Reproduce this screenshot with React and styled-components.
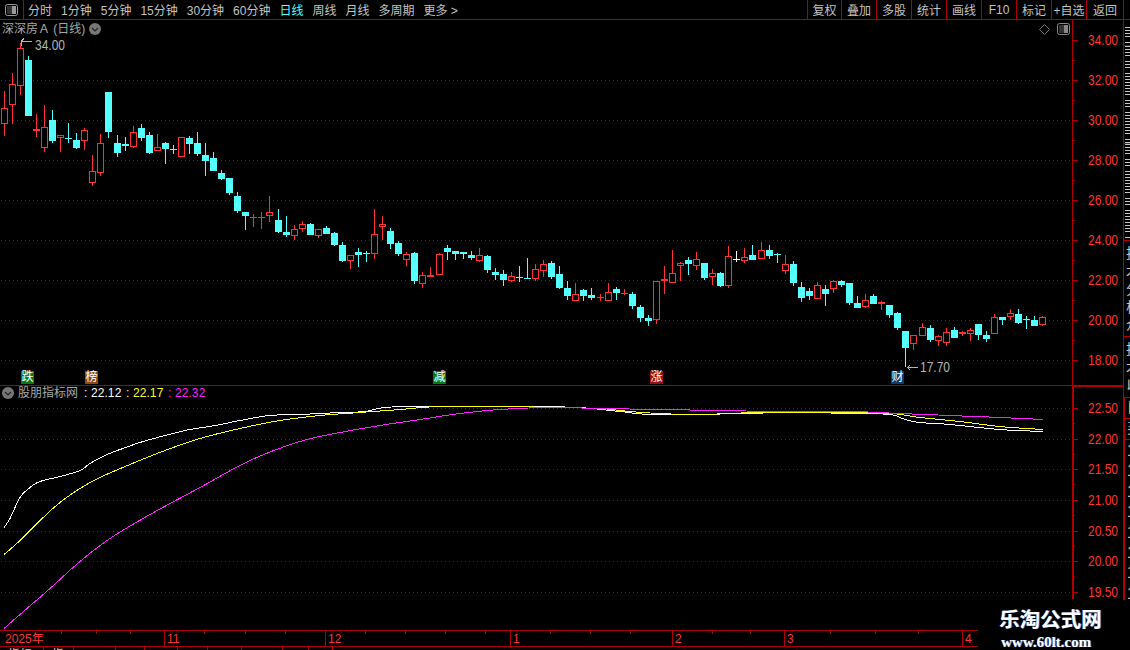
import React from "react";
import styled, { createGlobalStyle, css } from "styled-components";

const SANS = `"Liberation Sans", "Noto Sans CJK SC", sans-serif`;
const RED = "#ff3232";
const LINE = "#b00000";
const DOT = "#a00000";
const CYAN = "#54ffff";

const Global = createGlobalStyle`
  html, body { margin: 0; padding: 0; background: #000; }
  body { width: 1130px; height: 650px; overflow: hidden; font-family: ${SANS}; }
`;

const Page = styled.div`
  position: relative; width: 1130px; height: 650px; display: flex; background: #000; overflow: hidden;
`;
const MainColumn = styled.div`
  width: 1123px; height: 650px; display: flex; flex-direction: column; flex: none;
`;
const TopBar = styled.div`
  height: 19px; flex: none; display: flex; align-items: center; border-bottom: 1px solid ${LINE};
  font-size: 12px; color: #c4c4c4;
`;
const LayoutButton = styled.div`
  width: 24px; height: 19px; flex: none; box-sizing: border-box; display: flex; align-items: center; justify-content: center;
  border-right: 1px solid ${LINE};
`;
const PeriodNav = styled.nav`
  display: flex; gap: 9px; margin-left: 4px; flex: 1; white-space: nowrap;
`;
const Period = styled.span`
  color: ${(p) => (p.$active ? CYAN : "#c4c4c4")};
`;
const ToolGroup = styled.div`
  display: flex; height: 19px;
`;
const Tool = styled.div`
  width: ${(p) => p.$w || 34}px; box-sizing: border-box; display: flex; align-items: center; justify-content: center;
  border-left: 1px solid ${LINE}; white-space: nowrap; overflow: hidden;
`;
const Pane = styled.section`
  position: relative; display: flex; height: ${(p) => p.$h}px; flex: none;
  border-bottom: ${(p) => (p.$last ? "none" : `1px solid ${LINE}`)};
`;
const Plot = styled.svg`
  display: block; width: 1072px; height: 100%; flex: none;
`;
const Axis = styled.svg`
  display: block; width: 51px; height: 100%; flex: none;
`;
const Header = styled.div`
  position: absolute; left: 2px; top: ${(p) => p.$top}px; display: flex; align-items: center;
  font-size: 12px; line-height: 16px; color: #a8a8a8; white-space: nowrap;
`;
const Round = styled.svg`
  display: block; margin-left: ${(p) => p.$ml || 0}px; margin-right: ${(p) => p.$mr || 0}px;
`;
const CornerIcons = styled.div`
  position: absolute; right: 53px; top: 3px; display: flex; align-items: center; gap: 7px;
`;
const Value = styled.span`
  color: ${(p) => p.$c}; font-size: 12px; width: 42px; letter-spacing: 0.1px;
  &:first-of-type { margin-left: 6px; }
`;
const Badge = styled.div`
  position: absolute; left: ${(p) => p.$x}px; top: 351px; width: 13px; height: 13px;
  background: ${(p) => p.$bg}; color: #fff; font-size: 12px; line-height: 13px; text-align: center;
`;
const TimeBar = styled.div`
  position: relative; height: 15px; flex: none; border-top: 1px solid ${LINE}; border-bottom: 1px solid ${LINE};
  color: ${RED}; font-size: 12px; line-height: 16px;
`;
const TimeLabel = styled.span`
  position: absolute; left: ${(p) => p.$x}px; top: 0; height: 15px; padding-left: ${(p) => (p.$first ? 5 : 2)}px;
  border-left: ${(p) => (p.$first ? "none" : `1px solid ${LINE}`)}; white-space: nowrap;
`;
const TimeTick = styled.i`
  position: absolute; left: ${(p) => p.$x}px; top: 0; width: 1px; height: 3px; background: ${LINE};
`;
const TabRow = styled.div`
  display: flex; height: 3px; overflow: hidden; flex: none; font-size: 12px; line-height: 14px; color: #d8d8d8;
`;
const Tab = styled.div`
  width: ${(p) => p.$w}px; flex: none; border-right: 1px solid ${LINE}; padding-left: 8px; padding-top: 1px;
  box-sizing: border-box; white-space: nowrap; overflow: hidden;
`;
const SideStrip = styled.aside`
  width: 7px; flex: none; display: flex; flex-direction: column; height: 600px; overflow: hidden;
`;
const SideUpper = styled.div`
  flex: none; overflow: hidden; border-left: 1px solid ${LINE};
`;
const SideLower = styled.div`
  flex: 1; overflow: hidden; border-left: 2px solid ${LINE};
`;
const SideCell = styled.div`
  height: ${(p) => p.$h}px; box-sizing: border-box; overflow: hidden; white-space: pre;
  border-bottom: ${(p) => (p.$plain ? "none" : `1px solid ${LINE}`)};
  color: ${(p) => p.$c || "#c8c8c8"}; font-size: ${(p) => p.$fs || 12}px; line-height: ${(p) => p.$lh || 13}px;
  padding-left: 2px; padding-top: ${(p) => p.$pt || 0}px;
  ${(p) => p.$dashed && css`
    background-image:
      repeating-linear-gradient(to bottom, transparent 0 11px, #000 11px 13px),
      repeating-linear-gradient(to bottom, #c8c8c8 0 1px, transparent 1px 3px);
    background-origin: border-box;
    background-position: 1px ${p.$pt || 0}px;
    background-repeat: no-repeat;
  `}
`;
const Watermark = styled.div`
  position: absolute; left: 978px; top: 600px; width: 152px; height: 50px; background: #000;
  display: flex; flex-direction: column; align-items: flex-start; padding-left: 21px; box-sizing: border-box;
  font-family: "Liberation Serif", "Noto Sans CJK SC", serif; font-weight: 700; color: #fff;
  text-shadow: 1px 0 0 #4a78c8;
`;
const MarkTitle = styled.div`
  font-size: 20.5px; line-height: 24px; margin-top: 8px; white-space: nowrap;
`;
const MarkUrl = styled.div`
  font-size: 15px; line-height: 16px; margin-top: 2px; margin-left: 2px; white-space: nowrap;
`;
const AxisText = styled.text`
  fill: ${RED}; font-size: 14px; font-family: ${SANS};
`;
const PriceNote = styled.text`
  fill: #b4b4b4; font-size: 14px; font-family: ${SANS};
`;

// [high, bodyTop, bodyBottom, low, colour] : r red, c cyan, w white
const CANDLES = [
[91,108,124,136,"r"],[73,84,105,124,"r"],[43,48,86,95,"r"],[56,60,116,116,"c"],[114,129,131,137,"r"],
[105,127,148,152,"r"],[110,120,141,143,"c"],[135,135,138,152,"r"],[123,138,139,143,"c"],[133,140,148,149,"c"],
[128,130,141,150,"r"],[155,171,183,186,"r"],[134,143,173,176,"r"],[92,92,132,138,"c"],[135,143,153,157,"c"],
[137,144,146,151,"c"],[126,132,147,148,"r"],[124,128,138,141,"c"],[132,135,153,154,"c"],[134,147,151,151,"r"],
[142,143,149,164,"c"],[145,149,150,154,"c"],[137,137,157,157,"r"],[136,138,144,154,"c"],[132,143,154,156,"c"],
[143,155,161,176,"c"],[152,158,171,171,"c"],[170,173,179,180,"c"],[178,178,193,195,"c"],[192,196,211,213,"c"],
[212,212,216,230,"c"],[214,217,218,227,"r"],[212,217,218,229,"r"],[196,212,216,222,"r"],[209,220,232,233,"c"],
[216,232,235,237,"c"],[225,229,236,240,"r"],[221,224,229,232,"r"],[223,224,235,235,"c"],[229,229,236,238,"r"],
[226,228,234,234,"c"],[232,233,245,246,"c"],[242,245,261,262,"c"],[255,255,261,269,"r"],[248,252,255,267,"c"],
[251,253,254,262,"c"],[209,234,254,259,"r"],[216,224,227,240,"r"],[228,231,244,249,"c"],[241,243,254,256,"c"],
[252,254,260,266,"r"],[252,253,281,284,"c"],[272,275,284,288,"r"],[267,275,277,277,"r"],[253,254,275,275,"r"],
[245,248,252,260,"c"],[251,251,254,260,"c"],[252,252,254,259,"c"],[251,255,258,260,"c"],[248,255,261,262,"r"],
[255,256,270,273,"c"],[268,272,275,280,"c"],[270,274,280,286,"c"],[272,276,281,282,"r"],[266,277,278,282,"c"],
[258,278,279,279,"c"],[264,269,279,281,"r"],[260,264,271,277,"r"],[261,263,277,279,"c"],[266,274,288,289,"c"],
[281,288,296,300,"c"],[283,294,301,301,"r"],[289,290,296,301,"c"],[288,295,298,300,"c"],[294,297,298,301,"r"],
[283,292,301,301,"r"],[287,289,293,300,"c"],[289,293,294,295,"r"],[292,294,306,309,"c"],[305,307,318,322,"c"],
[315,318,321,326,"c"],[281,281,320,324,"r"],[266,279,281,294,"r"],[250,273,283,283,"r"],[262,263,266,281,"r"],
[257,260,264,275,"c"],[252,259,266,270,"r"],[263,263,278,280,"c"],[269,273,277,285,"r"],[272,273,286,287,"c"],
[246,256,286,288,"r"],[251,259,260,262,"w"],[248,257,261,263,"r"],[245,255,260,260,"c"],[242,250,259,259,"r"],
[245,250,256,259,"c"],[253,254,255,263,"c"],[255,264,271,274,"r"],[261,264,283,286,"c"],[282,287,298,302,"c"],
[288,291,296,300,"c"],[282,285,299,299,"r"],[285,289,294,306,"c"],[280,281,289,293,"r"],[280,281,285,287,"c"],
[283,283,303,305,"c"],[296,303,308,308,"c"],[294,300,307,308,"r"],[294,296,304,304,"c"],[301,302,304,310,"r"],
[305,305,315,318,"c"],[312,313,328,330,"c"],[331,331,348,367,"c"],[335,335,344,350,"r"],[323,327,336,336,"r"],
[325,328,340,342,"c"],[335,336,341,346,"r"],[328,332,343,346,"r"],[327,330,338,338,"c"],[331,332,334,336,"r"],
[328,330,334,341,"r"],[324,324,335,340,"c"],[331,335,339,342,"c"],[314,317,334,334,"r"],[317,317,320,325,"c"],
[309,313,317,320,"r"],[309,314,323,324,"c"],[316,319,320,329,"c"],[316,320,326,326,"c"],[316,317,325,326,"r"],
];

const COLORS = { r: RED, c: CYAN, w: "#ffffff" };
const TOP = 20;

function Candle({ i, d }) {
  const cx = Math.floor(4.3 + 8.05 * i);
  const [hi, t, b, lo, k] = d;
  const col = COLORS[k];
  const y = (v) => v - TOP;
  const solid = k !== "r" || b - t < 3;
  return (
    <g>
      {t > hi && <rect x={cx} y={y(hi)} width="1" height={t - hi} fill={col} />}
      {lo > b && <rect x={cx} y={y(b)} width="1" height={lo - b} fill={col} />}
      {solid ? (
        <rect x={cx - 3} y={y(t)} width="7" height={Math.max(b - t, 1)} fill={col} />
      ) : (
        <rect x={cx - 2.5} y={y(t) + 0.5} width="6" height={b - t - 1} fill="#000" stroke={col} strokeWidth="1" />
      )}
    </g>
  );
}

const PRICE_LEVELS = [34, 32, 30, 28, 26, 24, 22, 20, 18];
const priceY = (v) => 40 + (34 - v) * 20 - TOP;

const IND_TOP = 386;
const IND_LEVELS = [22.5, 22, 21.5, 21, 20.5, 20, 19.5];
const indY = (v) => Math.round(408 + (22.5 - v) * 61.35) - IND_TOP;

const WHITE = [[4,527],[10,518],[20,497],[30,487],[40,481],[60,476],[80,470],[90,463],[105,455],[120,449],[140,442],[165,435],[190,429],[215,425],[240,420],[270,415],[300,414],[340,412],[365,411],[385,407],[420,406],[500,406],[550,406],[590,408],[620,411],[650,414],[700,414],[740,413],[800,412],[850,413],[890,414],[905,419],[920,422],[950,424],[1000,429],[1043,431]];
const YELLOW = [[4,554],[20,540],[40,520],[60,502],[80,488],[100,477],[130,464],[165,450],[200,438],[240,428],[280,420],[320,415],[360,412],[400,409],[440,406],[500,406],[560,407],[600,408],[630,411],[660,413],[700,414],[760,412],[830,412],[890,413],[920,417],[960,421],[1000,426],[1043,429]];
const MAGENTA = [[4,628],[20,614],[50,588],[80,561],[110,538],[150,514],[200,487],[250,460],[300,441],[340,432],[380,425],[420,419],[460,413],[500,409],[550,407],[600,408],[660,409],[720,410],[780,411],[850,411],[900,413],[950,415],[1000,417],[1043,419]];

// Catmull-Rom sampling, so the averaged curves run smooth instead of polygonal
function smooth(a) {
  const out = [];
  for (let i = 0; i < a.length - 1; i++) {
    const p0 = a[Math.max(i - 1, 0)], p1 = a[i], p2 = a[i + 1], p3 = a[Math.min(i + 2, a.length - 1)];
    const n = Math.max(2, Math.round((p2[0] - p1[0]) / 3));
    for (let s = 0; s < n; s++) {
      const t = s / n, t2 = t * t, t3 = t2 * t;
      const f = (k) => 0.5 * (2 * p1[k] + (p2[k] - p0[k]) * t + (2 * p0[k] - 5 * p1[k] + 4 * p2[k] - p3[k]) * t2 + (3 * p1[k] - p0[k] - 3 * p2[k] + p3[k]) * t3);
      out.push([f(0), f(1)]);
    }
  }
  out.push(a[a.length - 1]);
  return out;
}
const pts = (a) => smooth(a).map(([x, y]) => `${x.toFixed(1)},${(y - IND_TOP + 0.5).toFixed(1)}`).join(" ");

const PERIODS = ["分时", "1分钟", "5分钟", "15分钟", "30分钟", "60分钟", "日线", "周线", "月线", "多周期", "更多 >"];
const TOOLS = [["复权", 34], ["叠加", 35], ["多股", 35], ["统计", 35], ["画线", 35], ["F10", 35], ["标记", 35], ["+自选", 35], ["返回", 37]];

const PanelIcon = ({ c = "#9a9a9a" }) => (
  <svg width="13" height="12" viewBox="0 0 13 12">
    <rect x="0.5" y="0.5" width="12" height="11" rx="2" fill="none" stroke={c} />
    <rect x="7" y="2" width="4" height="8" fill={c} />
    <rect x="2" y="2" width="5" height="8" fill="#333" />
  </svg>
);

const Chevron = ({ ml, mr }) => (
  <Round $ml={ml} $mr={mr} width="12" height="12" viewBox="0 0 12 12">
    <circle cx="6" cy="6" r="6" fill="#777" />
    <path d="M3 5 L6 8 L9 5" fill="none" stroke="#222" strokeWidth="1.2" />
  </Round>
);

const ONES = Array.from({ length: 9 }, () => "1").join("\n");

export default function App() {
  return (
    <Page>
      <Global />
      <MainColumn>
        <TopBar>
          <LayoutButton><PanelIcon /></LayoutButton>
          <PeriodNav>
            {PERIODS.map((p) => <Period key={p} $active={p === "日线"}>{p}</Period>)}
          </PeriodNav>
          <ToolGroup>
            {TOOLS.map(([t, w]) => <Tool key={t} $w={w}>{t}</Tool>)}
          </ToolGroup>
        </TopBar>

        <Pane $h={365}>
          <Plot viewBox="0 0 1072 365" shapeRendering="crispEdges">
            {PRICE_LEVELS.slice(1).map((v) => (
              <line key={v} x1="1" x2="1072" y1={priceY(v) + 0.5} y2={priceY(v) + 0.5} stroke={DOT} strokeDasharray="1 3" />
            ))}
            {CANDLES.map((d, i) => <Candle key={i} i={i} d={d} />)}
            <path d="M21 21.5h11M21 21.5v4M21 21.5l3 -3" stroke="#b4b4b4" fill="none" />
            <PriceNote x="35" y="30" textLength="30" lengthAdjust="spacingAndGlyphs">34.00</PriceNote>
            <path d="M907 347.5h11M907 347.5l3 -2M907 347.5l3 2" stroke="#b4b4b4" fill="none" />
            <PriceNote x="920" y="352" textLength="30" lengthAdjust="spacingAndGlyphs">17.70</PriceNote>
          </Plot>
          <Axis viewBox="0 0 51 365">
            <rect x="0" y="0" width="1" height="365" fill={LINE} shapeRendering="crispEdges" />
            {PRICE_LEVELS.map((v) => (
              <g key={v}>
                <rect x="0" y={priceY(v)} width="6" height="1" fill={LINE} shapeRendering="crispEdges" />
                {v > 18 && <rect x="0" y={priceY(v) + 20} width="3" height="1" fill={LINE} shapeRendering="crispEdges" />}
                <AxisText x="16" y={priceY(v) + 5} textLength="30" lengthAdjust="spacingAndGlyphs">{v.toFixed(2)}</AxisText>
              </g>
            ))}
          </Axis>
          <Header $top={1}>
            深深房Ａ (日线)
            <Chevron ml={4} />
          </Header>
          <CornerIcons>
            <svg width="11" height="11" viewBox="0 0 11 11">
              <path d="M5.5 0.5 L10.5 5.5 L5.5 10.5 L0.5 5.5 Z" fill="none" stroke="#777" />
            </svg>
            <PanelIcon c="#888" />
          </CornerIcons>
          <Badge $x={21} $bg="#0a7a14">跌</Badge>
          <Badge $x={85} $bg="#8a4c14">榜</Badge>
          <Badge $x={433} $bg="#0a7a14">减</Badge>
          <Badge $x={650} $bg="#9a1010">涨</Badge>
          <Badge $x={891} $bg="#0a3c70">财</Badge>
        </Pane>

        <Pane $h={244} $last>
          <Plot viewBox="0 0 1072 244" shapeRendering="crispEdges">
            {IND_LEVELS.map((v) => (
              <line key={v} x1="1" x2="1072" y1={indY(v) + 0.5} y2={indY(v) + 0.5} stroke={DOT} strokeDasharray="1 3" />
            ))}
            <polyline points={pts(WHITE)} fill="none" stroke="#ffffff" />
            <polyline points={pts(YELLOW)} fill="none" stroke="#ffff20" />
            <polyline points={pts(MAGENTA)} fill="none" stroke="#ff20ff" />
          </Plot>
          <Axis viewBox="0 0 51 244">
            <rect x="0" y="0" width="2" height="213" fill={LINE} shapeRendering="crispEdges" />
            <rect x="0" y="-1" width="51" height="2" fill={LINE} shapeRendering="crispEdges" />
            {IND_LEVELS.map((v) => (
              <g key={v}>
                <rect x="0" y={indY(v)} width="6" height="1" fill={LINE} shapeRendering="crispEdges" />
                {v > 19.5 && <rect x="0" y={indY(v) + 15} width="3" height="1" fill={LINE} shapeRendering="crispEdges" />}
                <AxisText x="16" y={indY(v) + 5} textLength="30" lengthAdjust="spacingAndGlyphs">{v.toFixed(2)}</AxisText>
              </g>
            ))}
          </Axis>
          <Header $top={-1}>
            <Chevron mr={4} />
            股朋指标网
            <Value $c="#ffffff">: 22.12</Value>
            <Value $c="#ffff20">: 22.17</Value>
            <Value $c="#ff20ff">: 22.32</Value>
          </Header>
        </Pane>

        <TimeBar>
          {[61, 96, 130, 204, 245, 285, 365, 405, 445, 485, 550, 590, 630, 712, 750, 830, 875, 918].map((x) => <TimeTick key={x} $x={x} />)}
          <TimeLabel $first $x={0}>2025年</TimeLabel>
          <TimeLabel $x={164}>11</TimeLabel>
          <TimeLabel $x={325}>12</TimeLabel>
          <TimeLabel $x={510}>1</TimeLabel>
          <TimeLabel $x={672}>2</TimeLabel>
          <TimeLabel $x={784}>3</TimeLabel>
          <TimeLabel $x={962}>4</TimeLabel>
        </TimeBar>
        <TabRow>
          <Tab $w={44}>指标</Tab>
          <Tab $w={30}>指</Tab>
          <Tab $w={42} />
          <Tab $w={29} />
          <Tab $w={33} />
          <Tab $w={30} />
          <Tab $w={34} />
          <Tab $w={41} />
          <Tab $w={26} />
          <Tab $w={24} />
        </TabRow>
      </MainColumn>

      <SideStrip>
        <SideUpper>
          <SideCell $h={20} />
          <SideCell $h={26} $dashed $pt={7} />
          <SideCell $h={98} $dashed />
          <SideCell $h={97} $dashed />
          <SideCell $h={96} $fs={14} $lh={18} $pt={3}>{"技\n术\n分\n析\n众"}</SideCell>
          <SideCell $h={61} $fs={14} $lh={18} $pt={3}>{"技\n术\n以"}</SideCell>
        </SideUpper>
        <SideLower>
          <SideCell $h={21} $c="#e8e820" $fs={14} $lh={18}>目</SideCell>
          <SideCell $h={21} $fs={14} $lh={18}>买</SideCell>
          <SideCell $h={160} $plain $c="#d0d0d0" $fs={16} $lh={20.4} $pt={1}>{ONES}</SideCell>
        </SideLower>
      </SideStrip>

      <Watermark>
        <MarkTitle>乐淘公式网</MarkTitle>
        <MarkUrl>www.60lt.com</MarkUrl>
      </Watermark>
    </Page>
  );
}
